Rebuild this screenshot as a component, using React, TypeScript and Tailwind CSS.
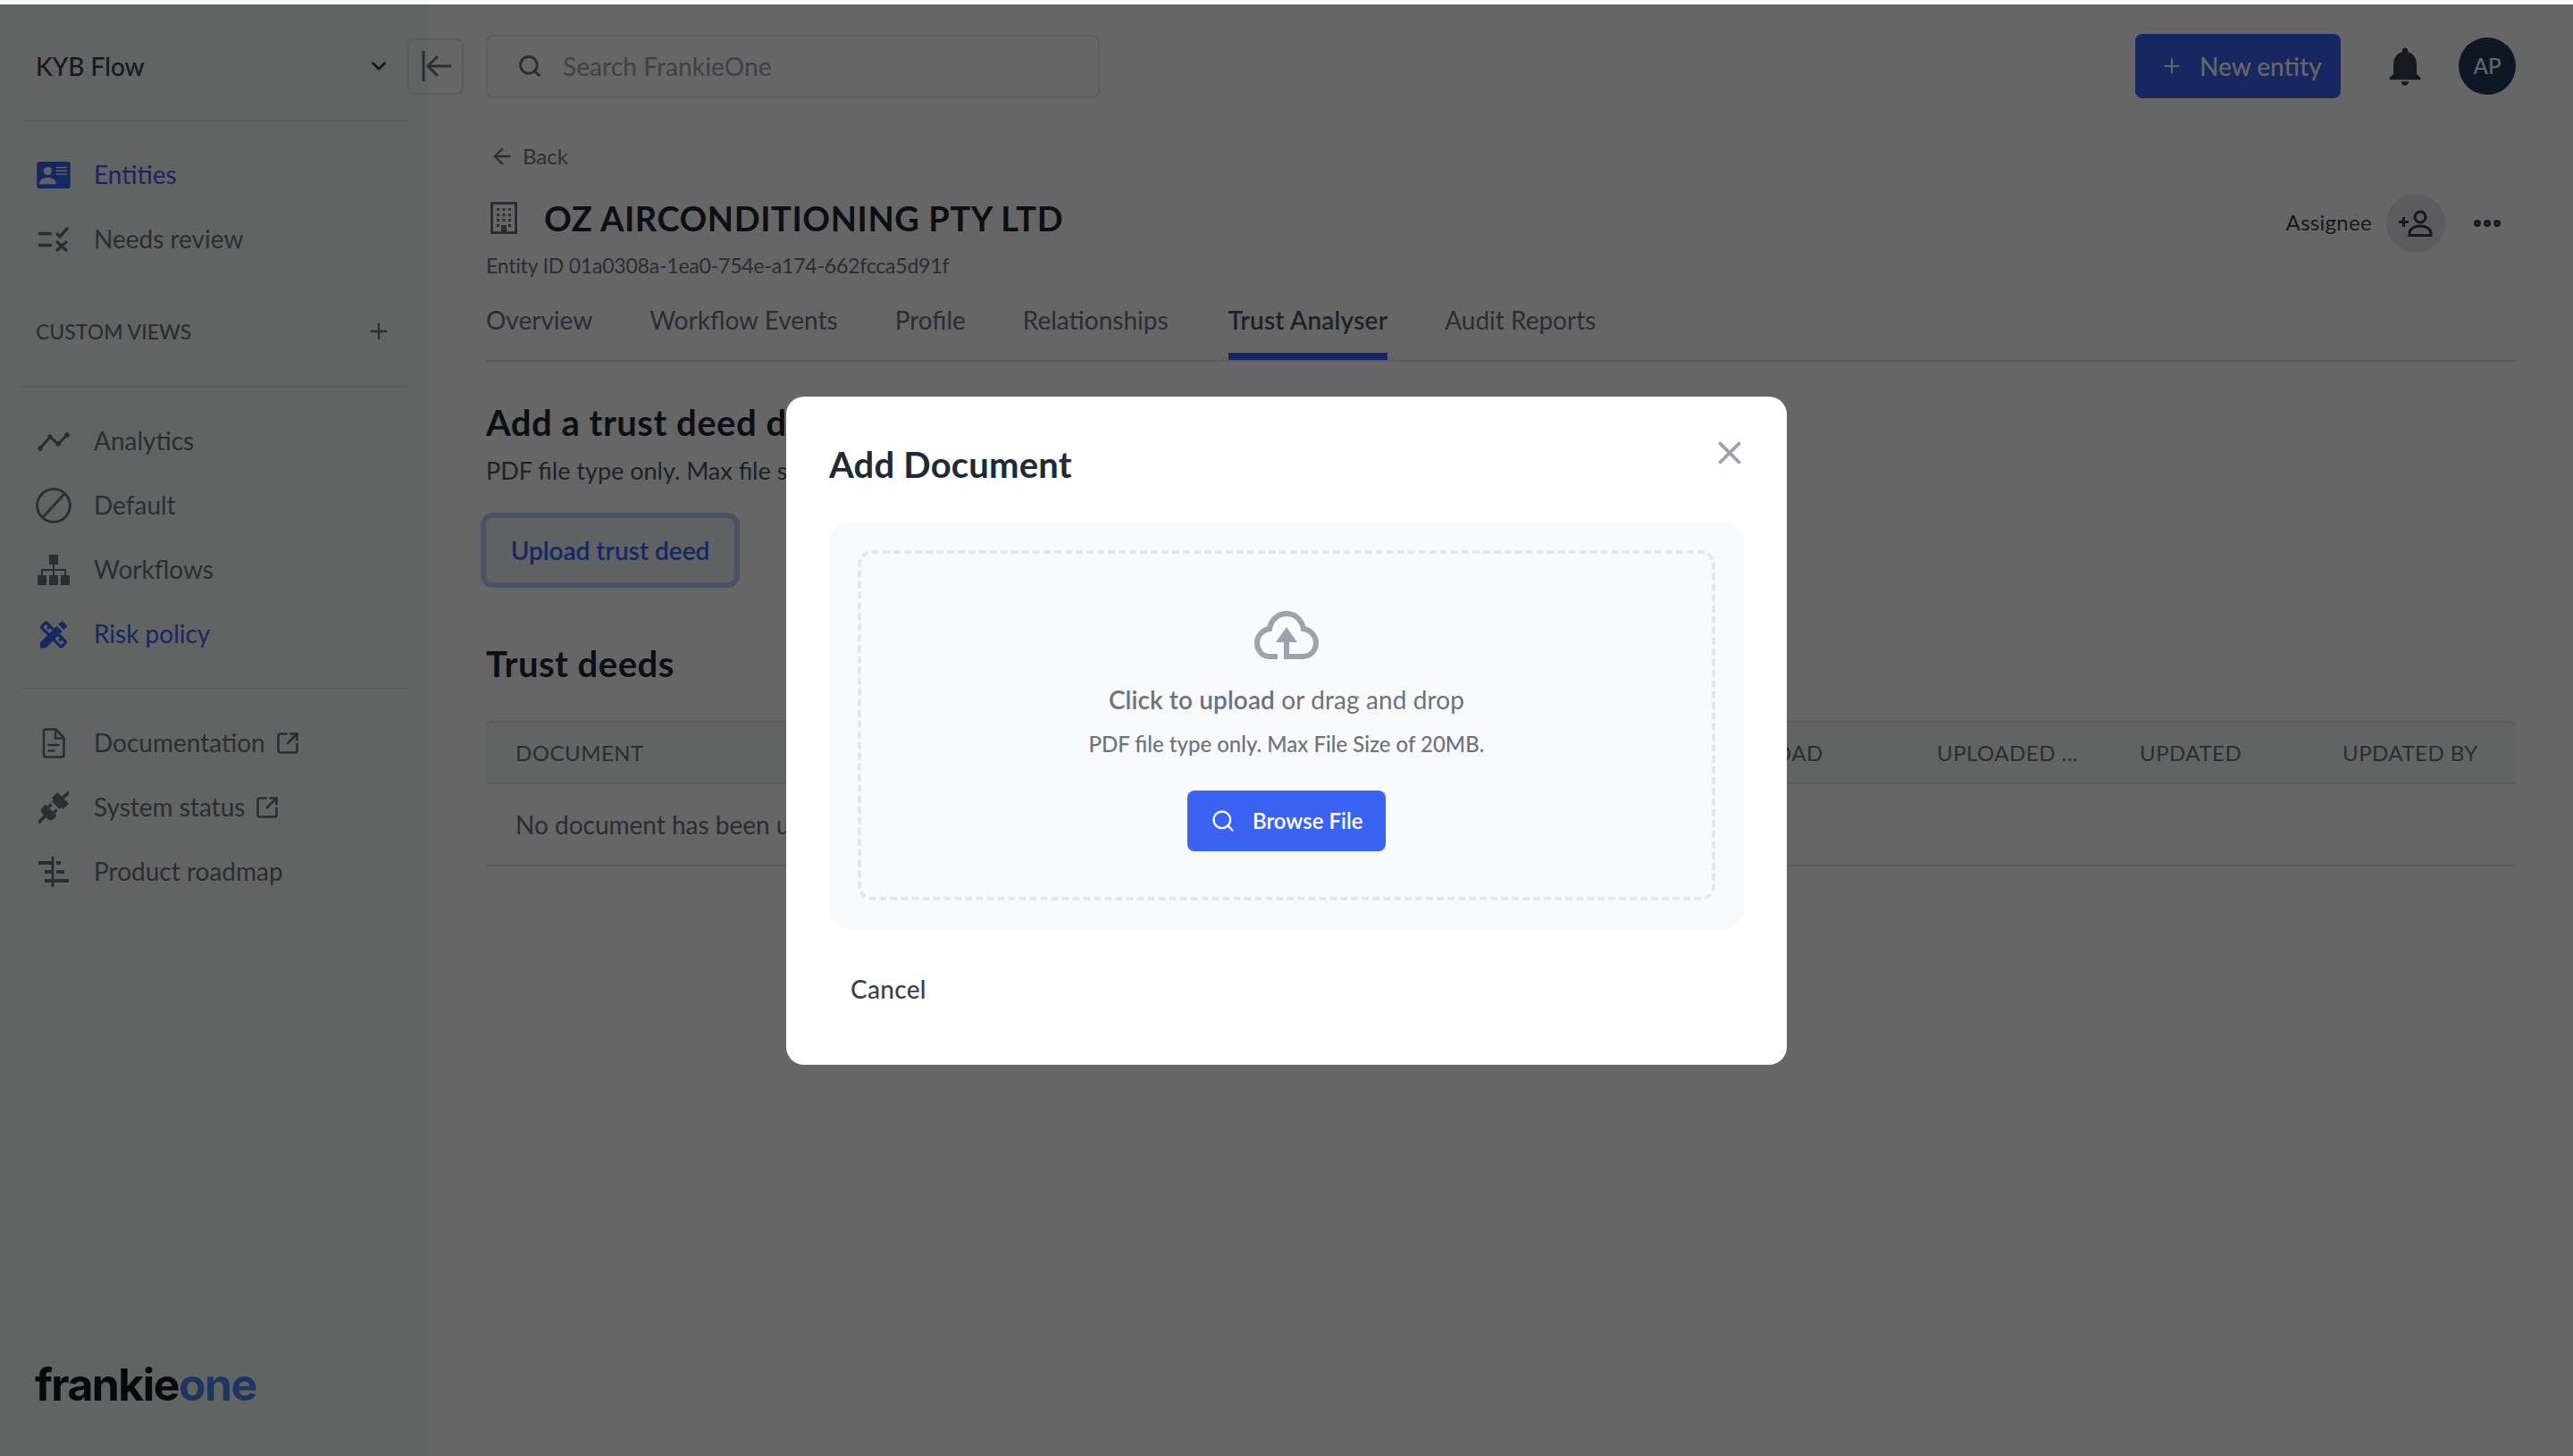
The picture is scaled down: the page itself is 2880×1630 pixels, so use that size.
import type { ReactNode } from 'react';
import { ArrowLeft, ChevronDown, Ellipsis, Plus, Search, SquareArrowOutUpRight, X } from 'lucide-react';
import { MdDesignServices, MdNotifications } from 'react-icons/md';

function IdCardIcon() {
  return (
    <svg viewBox="0 0 40 32" className="h-[30px] w-[40px]">
      <rect width="40" height="32" rx="3" fill="#3b63f3" />
      <circle cx="13" cy="11" r="5" fill="#eef3f6" />
      <path d="M3 27c0-6 5-8 10-8s10 2 10 8z" fill="#eef3f6" />
      <path d="M23 6h13v1.6H23zM23 10h13v1.6H23zM23 14h13v1.6H23z" fill="#eef3f6" />
    </svg>
  );
}

function ReviewIcon() {
  return (
    <svg viewBox="0 0 34 28" className="h-[28px] w-[34px]" fill="none" stroke="currentColor">
      <path d="M0 7.5h15M0 20.5h15" strokeWidth="3.4" />
      <path d="M20 7l4 4 9-10" strokeWidth="3.4" />
      <path d="M20 16l12 11M32 16L20 27" strokeWidth="3.4" />
    </svg>
  );
}

function AnalyticsIcon() {
  return (
    <svg viewBox="0 0 36 22" className="h-[22px] w-[36px]" fill="currentColor" stroke="currentColor">
      <path d="M3 19L14 6l9 8L33 4" fill="none" strokeWidth="3" />
      <circle cx="3" cy="19" r="2.4" />
      <circle cx="14" cy="6" r="2.4" />
      <circle cx="23" cy="14" r="2.4" />
      <circle cx="33" cy="4" r="2.4" />
    </svg>
  );
}

function DefaultIcon() {
  return (
    <svg viewBox="0 0 40 40" className="h-[40px] w-[40px]" fill="none" stroke="currentColor" strokeWidth="2.8">
      <circle cx="20" cy="20" r="18.4" />
      <path d="M8 33L32 7" />
    </svg>
  );
}

function WorkflowsIcon() {
  return (
    <svg viewBox="0 0 36 34" className="h-[34px] w-[36px]" fill="currentColor">
      <rect x="13" y="0" width="10" height="11" />
      <rect x="0" y="23" width="10" height="11" />
      <rect x="13" y="23" width="10" height="11" />
      <rect x="26" y="23" width="10" height="11" />
      <path d="M17 11h2v5h13v7h-2v-5H19v5h-2v-5H6v5H4v-7h13z" />
    </svg>
  );
}

function DocIcon() {
  return (
    <svg viewBox="0 0 26 34" className="h-[34px] w-[26px]" fill="none" stroke="currentColor" strokeWidth="2.6">
      <path d="M2 3.5Q2 1.5 4 1.5h11.5L24.5 11v20q0 1.5-2 1.5H4q-2 0-2-2z" strokeLinejoin="round" />
      <path d="M15 2v9.5h9.5" />
      <path d="M6.5 19h13M6.5 25.5h8" />
    </svg>
  );
}

function PlugIcon() {
  return (
    <svg viewBox="0 0 34 36" className="h-[36px] w-[34px]" fill="currentColor">
      <g transform="rotate(45 17 18)">
        <rect x="15.2" y="-6" width="3.6" height="10" />
        <rect x="8" y="3" width="18" height="9" />
        <rect x="11" y="12" width="12" height="2.6" />
        <rect x="11" y="17" width="3.4" height="5" />
        <rect x="19.6" y="17" width="3.4" height="5" />
        <path d="M8 22h18v5q0 4-5 5h-8q-5-1-5-5z" />
        <rect x="15.2" y="30" width="3.6" height="12" />
      </g>
    </svg>
  );
}

function RoadmapIcon() {
  return (
    <svg viewBox="0 0 34 34" className="h-[34px] w-[34px]" fill="currentColor">
      <rect x="14.5" y="0" width="3" height="34" />
      <rect x="0" y="5" width="15" height="4" />
      <rect x="20" y="5" width="5" height="4" />
      <rect x="7" y="15" width="8" height="4" />
      <rect x="20" y="15" width="9" height="4" />
      <rect x="7" y="25" width="8" height="4" />
      <rect x="17" y="25" width="17" height="4" />
    </svg>
  );
}

function CollapseIcon() {
  return (
    <svg viewBox="0 0 34 36" className="h-[36px] w-[34px]" fill="none" stroke="currentColor" strokeWidth="3">
      <path d="M3 1v34" />
      <path d="M34 18H9" />
      <path d="M19 7L8 18l11 11" />
    </svg>
  );
}

function BuildingIcon() {
  return (
    <svg viewBox="0 0 30 36" className="h-[36px] w-[30px]" fill="#6b7280">
      <path d="M0 0h30v36H0zM3 3v30h24V3z" fillRule="evenodd" />
      <path d="M7 7h3v3H7zM13.5 7h3v3h-3zM20 7h3v3h-3zM7 13h3v3H7zM13.5 13h3v3h-3zM20 13h3v3h-3zM7 19h3v3H7zM13.5 19h3v3h-3zM20 19h3v3h-3zM7 25h3v3H7zM20 25h3v3h-3zM12 26h6v8h-6z" />
    </svg>
  );
}

function AddPersonIcon() {
  return (
    <svg viewBox="0 0 38 30" className="h-[30px] w-[38px]" fill="none" stroke="currentColor" strokeWidth="3">
      <circle cx="24" cy="8" r="6" />
      <path d="M12 28.5v-2C12 21 18 18 24 18s12 3 12 8.500v2z" />
      <path d="M0 13.500h11M5.500 8v11" />
    </svg>
  );
}

function CloudUploadIcon() {
  return (
    <svg viewBox="0 0 72 54" className="h-[54px] w-[72px]" fill="none" stroke="#9ca3af" strokeWidth="6">
      <path d="M26 51H17C8 51 3 43 3 36c0-8 6-15 14-16C19 9 27 3 36 3c10 0 17 7 19 17 8 1 14 8 14 16 0 8-6 15-15 15H36V28" />
      <path d="M24 35l12-17 12 17z" fill="#9ca3af" stroke="none" />
    </svg>
  );
}

function NavItem({
  icon,
  label,
  active,
  external,
}: {
  icon: ReactNode;
  label: string;
  active?: boolean;
  external?: boolean;
}) {
  return (
    <div className={`flex h-[72px] items-center pl-[16px] ${active ? 'text-[#3b63f3]' : 'text-[#6b7280]'}`}>
      <div className="flex w-[40px] shrink-0 items-center justify-center">{icon}</div>
      <span className="ml-[25px] pb-[2px] text-[28px]">{label}</span>
      {external && <SquareArrowOutUpRight size={28} strokeWidth={2.3} className="ml-[11px]" />}
    </div>
  );
}

const tabs = ['Overview', 'Workflow Events', 'Profile', 'Relationships', 'Trust Analyser', 'Audit Reports'];
const columns = ['UPLOAD', 'UPLOADED ...', 'UPDATED', 'UPDATED BY'];

export default function App() {
  return (
    <div className="relative flex h-[1630px] w-[2880px] overflow-hidden bg-white font-['Lato',sans-serif] text-[#374151]">
      <aside className="flex h-full w-[480px] shrink-0 flex-col bg-[#f5faf8] px-[24px]">
        <div className="flex h-[136px] items-center justify-between border-b-2 border-[#e5e7eb] pt-[14px] pl-[16px] pr-[19px]">
          <span className="text-[28px] font-medium">KYB Flow</span>
          <ChevronDown size={26} strokeWidth={2.6} />
        </div>

        <div className="pt-[24px] pb-[31px]">
          <NavItem icon={<IdCardIcon />} label="Entities" active />
          <NavItem icon={<ReviewIcon />} label="Needs review" />
        </div>

        <div className="flex h-[72px] items-center justify-between pl-[16px] pr-[18px] text-[#6b7280]">
          <span className="text-[23px] font-medium">CUSTOM VIEWS</span>
          <Plus size={28} strokeWidth={2} />
        </div>

        <div className="mt-[25px] border-y-2 border-[#e5e7eb] py-[24px]">
          <NavItem icon={<AnalyticsIcon />} label="Analytics" />
          <NavItem icon={<DefaultIcon />} label="Default" />
          <NavItem icon={<WorkflowsIcon />} label="Workflows" />
          <NavItem icon={<MdDesignServices size={45} />} label="Risk policy" active />
        </div>

        <div className="pt-[24px]">
          <NavItem icon={<DocIcon />} label="Documentation" external />
          <NavItem icon={<PlugIcon />} label="System status" external />
          <NavItem icon={<RoadmapIcon />} label="Product roadmap" />
        </div>

        <div className="mt-auto pb-[50px] pl-[15px] font-['Inter',sans-serif] text-[50px] font-bold leading-[60px] tracking-[-1.6px] text-[#10171f]">
          frankie<span className="text-[#4d85f5]">one</span>
        </div>
      </aside>

      <main className="flex min-w-0 flex-1 flex-col pr-[64px]">
        <header className="flex items-center pt-[38px]">
          <button className="-ml-[24px] mr-[25px] flex h-[63px] w-[63px] items-center justify-center rounded-[8px] border-2 border-[#e5e7eb] text-[#6b7280]">
            <CollapseIcon />
          </button>
          <div className="flex h-[71px] w-[687px] items-center rounded-[8px] border-2 border-[#e5e7eb] pl-[33px] text-[#9ca3af]">
            <Search size={28} strokeWidth={2.4} className="text-[#6b7280]" />
            <span className="ml-[23px] text-[28px] tracking-[0.1px]">Search FrankieOne</span>
          </div>
          <button className="ml-auto flex h-[72px] w-[230px] items-center rounded-[8px] bg-[#3b63f3] pl-[28px] text-[28px] font-medium text-white">
            <Plus size={26} strokeWidth={2} />
            <span className="ml-[18px]">New entity</span>
          </button>
          <div className="ml-[54px] flex w-[36px] justify-center text-[#374151]">
            <MdNotifications size={52} className="shrink-0" />
          </div>
          <div className="ml-[42px] flex h-[64px] w-[64px] items-center justify-center rounded-full bg-[#243c5e] text-[24px] font-medium text-white">
            AP
          </div>
        </header>

        <section className="pl-[64px]">
          <div className="mt-[45px] flex h-[40px] items-center pl-[4px] text-[#6b7280]">
            <ArrowLeft size={28} strokeWidth={2} />
            <span className="ml-[9px] text-[24px]">Back</span>
          </div>

          <div className="mt-[22px] flex items-start justify-between">
            <div>
              <div className="flex h-[54px] items-center pl-[5px]">
                <BuildingIcon />
                <h1 className="ml-[30px] text-[38px] font-bold leading-[46px] tracking-[0.6px] text-[#1f2937]">
                  OZ AIRCONDITIONING PTY LTD
                </h1>
              </div>
              <p className="mt-[11px] text-[23px] leading-[30px] tracking-[-0.2px] text-[#6b7280]">
                Entity ID 01a0308a-1ea0-754e-a174-662fcca5d91f
              </p>
            </div>
            <div className="flex items-center">
              <span className="pb-[2px] text-[24px] tracking-[0.3px] text-[#374151]">Assignee</span>
              <div className="ml-[16px] flex h-[66px] w-[66px] items-center justify-center rounded-full bg-[#e5e7eb] text-[#374151]">
                <AddPersonIcon />
              </div>
              <Ellipsis size={38} strokeWidth={3} className="ml-[28px] mr-[13px]" />
            </div>
          </div>

          <nav className="mt-[19px] flex h-[74px] gap-[64px] border-b-2 border-[#e5e7eb]">
            {tabs.map((tab) => (
              <div
                key={tab}
                className={`h-[72px] pt-[10px] text-[28px] leading-[34px] ${
                  tab === 'Trust Analyser'
                    ? 'ml-[3px] border-b-[8px] border-[#3b63f3] font-semibold tracking-[0.2px] text-[#4b5563]'
                    : 'text-[#6b7280]'
                }`}
              >
                {tab}
              </div>
            ))}
          </nav>

          <h2 className="mt-[43px] text-[40px] font-bold leading-[50px] tracking-[0.5px] text-[#1f2937]">
            Add a trust deed document
          </h2>
          <p className="mt-[11px] text-[27px] leading-[36px] text-[#4b5563]">PDF file type only. Max file size of 20MB.</p>
          <button className="-ml-[6px] mt-[29px] flex h-[84px] w-[290px] items-center justify-center rounded-[14px] border-[6px] border-[#b8cfff] bg-[#f0f2f8] text-[28px] font-semibold text-[#3b63f3]">
            Upload trust deed
          </button>

          <h2 className="mt-[60px] text-[40px] font-bold leading-[50px] tracking-[0.5px] text-[#1f2937]">Trust deeds</h2>
          <div className="mt-[39px] grid h-[71px] grid-cols-[1fr_227px_227px_227px_227px] items-center rounded-t-[6px] border-y-2 border-[#e5e7eb] bg-[#f5faf8] text-[24px] tracking-[0.5px] text-[#6b7280]">
            <span className="pl-[33px]">DOCUMENT</span>
            {columns.map((col) => (
              <span key={col} className="pl-[33px]">
                {col}
              </span>
            ))}
          </div>
          <div className="flex h-[92px] items-center border-b-2 border-[#e5e7eb] pl-[33px] text-[28px] text-[#6b7280]">
            No document has been uploaded yet
          </div>
        </section>
      </main>

      <div className="absolute inset-x-0 top-[5px] bottom-0 bg-black/60" />

      <div className="absolute left-[880px] top-[444px] h-[748px] w-[1120px] rounded-[20px] bg-white px-[48px]">
        <div className="relative flex h-[140px] items-start pt-[50px]">
          <h2 className="text-[40px] font-bold leading-[52px] tracking-[0.2px] text-[#1f2937]">Add Document</h2>
          <X size={42} strokeWidth={2.2} className="absolute right-[-5px] top-[42px] text-[#9ca3af]" />
        </div>
        <div className="h-[456px] rounded-[24px] bg-[#f9fafb] p-[32px]">
          <div className="flex h-[392px] flex-col items-center rounded-[16px] border-4 border-dashed border-[#e5e7eb] pt-[64px]">
            <CloudUploadIcon />
            <p className="mt-[27px] text-[28px] leading-[36px] tracking-[0.1px] text-[#6b7280]">
              <span className="font-semibold">Click to upload</span> or drag and drop
            </p>
            <p className="mt-[16px] text-[24px] font-medium leading-[32px] text-[#6b7280]">
              PDF file type only. Max File Size of 20MB.
            </p>
            <button className="mt-[36px] flex h-[68px] w-[222px] items-center rounded-[8px] bg-[#3b63f3] pl-[26px] text-[24px] font-semibold text-white">
              <Search size={28} strokeWidth={2} />
              <span className="ml-[19px]">Browse File</span>
            </button>
          </div>
        </div>
        <button className="ml-[24px] mt-[47px] text-[28px] font-medium leading-[40px] tracking-[0.3px] text-[#374151]">
          Cancel
        </button>
      </div>
    </div>
  );
}
